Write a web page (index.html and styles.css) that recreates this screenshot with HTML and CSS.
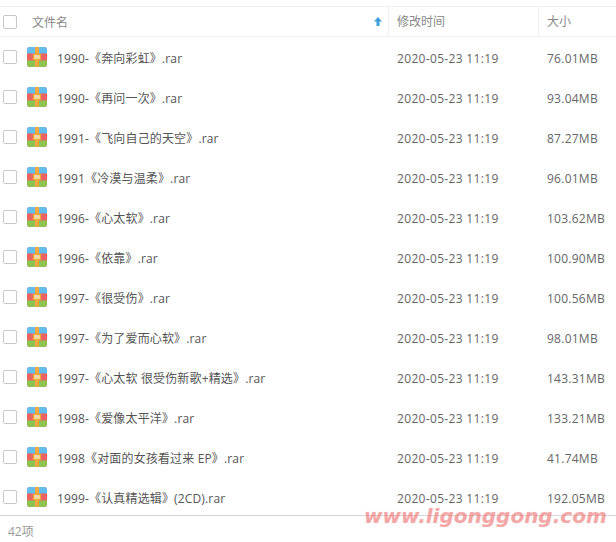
FILE: index.html
```html
<!DOCTYPE html>
<html lang="zh-CN">
<head>
    <meta charset="UTF-8">
    <title>文件列表</title>
    <link rel="stylesheet" href="styles.css">
</head>
<body>
    <svg class="svg-defs" width="0" height="0">
        <symbol id="rar" viewBox="0 0 20 20">
            <rect width="20" height="20" rx="3" fill="#e9645f"/>
            <path d="M3 0h14a3 3 0 0 1 3 3v3.500H0V3a3 3 0 0 1 3-3z" fill="#62bdee"/>
            <path d="M0 13.500h20V17a3 3 0 0 1-3 3H3a3 3 0 0 1-3-3z" fill="#8cc44f"/>
            <rect x="8" width="4" height="20" fill="#eda93f"/>
            <rect x="6.500" y="7.500" width="7" height="5" fill="#f7d9a0" stroke="#eda93f" stroke-width="1.200"/>
        </symbol>
    </svg>
    <div class="file-list">
        <div class="list-head">
            <div class="col-name">
                <span class="check"></span>
                <span class="head-name">文件名</span>
                <svg class="sort-arrow" width="8" height="9" viewBox="0 0 8 9"><path d="M4 0 8 4.500H5.500V9h-3V4.500H0z" fill="#3e9fdc"/></svg>
            </div>
            <div class="col-time">修改时间</div>
            <div class="col-size">大小</div>
        </div>

        <div class="list-row">
            <div class="col-name"><span class="check"></span><svg class="file-icon"><use href="#rar"/></svg><span class="file-name">1990-《奔向彩虹》.rar</span></div>
            <div class="col-time">2020-05-23 11:19</div>
            <div class="col-size">76.01MB</div>
        </div>
        <div class="list-row">
            <div class="col-name"><span class="check"></span><svg class="file-icon"><use href="#rar"/></svg><span class="file-name">1990-《再问一次》.rar</span></div>
            <div class="col-time">2020-05-23 11:19</div>
            <div class="col-size">93.04MB</div>
        </div>
        <div class="list-row">
            <div class="col-name"><span class="check"></span><svg class="file-icon"><use href="#rar"/></svg><span class="file-name">1991-《飞向自己的天空》.rar</span></div>
            <div class="col-time">2020-05-23 11:19</div>
            <div class="col-size">87.27MB</div>
        </div>
        <div class="list-row">
            <div class="col-name"><span class="check"></span><svg class="file-icon"><use href="#rar"/></svg><span class="file-name">1991《冷漠与温柔》.rar</span></div>
            <div class="col-time">2020-05-23 11:19</div>
            <div class="col-size">96.01MB</div>
        </div>
        <div class="list-row">
            <div class="col-name"><span class="check"></span><svg class="file-icon"><use href="#rar"/></svg><span class="file-name">1996-《心太软》.rar</span></div>
            <div class="col-time">2020-05-23 11:19</div>
            <div class="col-size">103.62MB</div>
        </div>
        <div class="list-row">
            <div class="col-name"><span class="check"></span><svg class="file-icon"><use href="#rar"/></svg><span class="file-name">1996-《依靠》.rar</span></div>
            <div class="col-time">2020-05-23 11:19</div>
            <div class="col-size">100.90MB</div>
        </div>
        <div class="list-row">
            <div class="col-name"><span class="check"></span><svg class="file-icon"><use href="#rar"/></svg><span class="file-name">1997-《很受伤》.rar</span></div>
            <div class="col-time">2020-05-23 11:19</div>
            <div class="col-size">100.56MB</div>
        </div>
        <div class="list-row">
            <div class="col-name"><span class="check"></span><svg class="file-icon"><use href="#rar"/></svg><span class="file-name">1997-《为了爱而心软》.rar</span></div>
            <div class="col-time">2020-05-23 11:19</div>
            <div class="col-size">98.01MB</div>
        </div>
        <div class="list-row">
            <div class="col-name"><span class="check"></span><svg class="file-icon"><use href="#rar"/></svg><span class="file-name">1997-《心太软 很受伤新歌+精选》.rar</span></div>
            <div class="col-time">2020-05-23 11:19</div>
            <div class="col-size">143.31MB</div>
        </div>
        <div class="list-row">
            <div class="col-name"><span class="check"></span><svg class="file-icon"><use href="#rar"/></svg><span class="file-name">1998-《爱像太平洋》.rar</span></div>
            <div class="col-time">2020-05-23 11:19</div>
            <div class="col-size">133.21MB</div>
        </div>
        <div class="list-row">
            <div class="col-name"><span class="check"></span><svg class="file-icon"><use href="#rar"/></svg><span class="file-name">1998《对面的女孩看过来 EP》.rar</span></div>
            <div class="col-time">2020-05-23 11:19</div>
            <div class="col-size">41.74MB</div>
        </div>
        <div class="list-row">
            <div class="col-name"><span class="check"></span><svg class="file-icon"><use href="#rar"/></svg><span class="file-name">1999-《认真精选辑》(2CD).rar</span></div>
            <div class="col-time">2020-05-23 11:19</div>
            <div class="col-size">192.05MB</div>
        </div>

        <div class="list-foot">42项</div>
    </div>
    <div class="watermark">www.ligonggong.com</div>
</body>
</html>
```

FILE: styles.css
```css
body {
    margin: 0;
    background-color: #fff;
    font-family: "Open Sans", "Noto Sans CJK SC", sans-serif;
    font-size: 12px;
    color: #666;
    overflow: hidden;
}
.svg-defs {
    display: block;
    height: 0;
}
.file-list {
    padding-top: 6px;
}
.list-head, .list-row {
    display: grid;
    grid-template-columns: 388px 150px 78px;
    align-items: center;
}
.list-head {
    height: 29px;
    border-top: 1px solid #f0f0f0;
    border-bottom: 1px solid #f0f0f0;
    color: #888;
}
.list-head .col-time, .list-head .col-size {
    height: 100%;
    line-height: 29px;
    border-left: 1px solid #f0f0f0;
    padding-left: 8px;
    box-sizing: border-box;
}
.list-row {
    height: 40px;
}
.col-name {
    display: flex;
    align-items: center;
    min-width: 0;
}
.list-row .col-time, .list-row .col-size {
    padding: 2px 0 0 9px;
    white-space: nowrap;
}
.list-row .col-time {
    letter-spacing: 0.33px;
}
.list-row .col-size {
    letter-spacing: 0.25px;
}
.check {
    width: 12px;
    height: 12px;
    margin-left: 3px;
    border: 1px solid #c8c8c8;
    border-radius: 2px;
    flex: none;
}
.head-name {
    margin-left: 15px;
    flex: 1;
}
.sort-arrow {
    margin-right: 6px;
}
.file-icon {
    width: 20px;
    height: 20px;
    margin-left: 10px;
    flex: none;
}
.file-name {
    margin-left: 10px;
    padding-top: 2px;
    color: #555;
    white-space: nowrap;
    letter-spacing: 0.15px;
}
.list-foot {
    margin-top: -2px;
    border-top: 1px solid #d8d8d8;
    height: 26px;
    line-height: 31px;
    padding-left: 8px;
    color: #999;
}
.watermark {
    position: absolute;
    left: 364px;
    top: 504px;
    font-family: "DejaVu Sans", sans-serif;
    font-size: 20px;
    font-weight: bold;
    font-style: italic;
    color: rgba(238, 120, 120, 0.45);
    text-shadow: 0 0 1px rgba(238, 120, 120, 0.4);
    white-space: nowrap;
}
```
